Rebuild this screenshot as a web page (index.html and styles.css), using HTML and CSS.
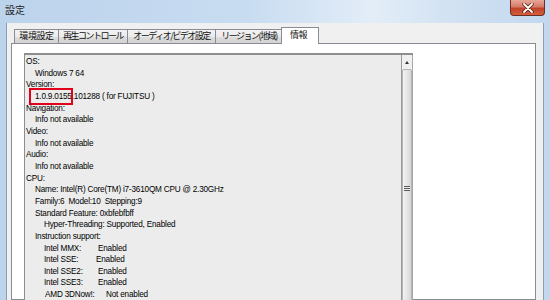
FILE: index.html
```html
<!DOCTYPE html>
<html lang="ja">
<head>
    <meta charset="UTF-8">
    <title>設定</title>
    <link rel="stylesheet" href="styles.css">
</head>
<body>
    <div class="window">
        <div class="titlebar">
            <span class="title">設定</span>
            <div class="close">
                <svg width="14" height="10" viewBox="0 0 14 10">
                    <path d="M3 1 L11 9 M11 1 L3 9" stroke="#5a1d16" stroke-width="3.4" stroke-linecap="round"/>
                    <path d="M3 1 L11 9 M11 1 L3 9" stroke="#ffffff" stroke-width="1.8" stroke-linecap="round"/>
                </svg>
            </div>
        </div>
        <div class="client">
            <div class="tabs">
                <div class="tab t-env">環境設定</div>
                <div class="tab t-play kana">再生コントロール</div>
                <div class="tab t-av kana">オーディオ/ビデオ設定</div>
                <div class="tab t-region kana">リージョン(地域)</div>
                <div class="tab active">情報</div>
            </div>
            <div class="panel">
                <div class="listbox">
                    <div class="lines">
                        <div class="l0">OS:</div>
                        <div class="l1">Windows 7 64</div>
                        <div class="l0">Version:</div>
                        <div class="l1"><span class="mark">1.0.9.0155</span>.101288 ( for FUJITSU )</div>
                        <div class="l0">Navigation:</div>
                        <div class="l1">Info not available</div>
                        <div class="l0">Video:</div>
                        <div class="l1">Info not available</div>
                        <div class="l0">Audio:</div>
                        <div class="l1">Info not available</div>
                        <div class="l0">CPU:</div>
                        <div class="l1">Name: Intel(R) Core(TM) i7-3610QM CPU @ 2.30GHz</div>
                        <div class="l1">Family:6&nbsp; Model:10&nbsp; Stepping:9</div>
                        <div class="l1">Standard Feature: 0xbfebfbff</div>
                        <div class="l2">Hyper-Threading: Supported, Enabled</div>
                        <div class="l1">Instruction support:</div>
                        <div class="l2"><span class="key">Intel MMX:</span>Enabled</div>
                        <div class="l2"><span class="key short">Intel SSE:</span>Enabled</div>
                        <div class="l2"><span class="key">Intel SSE2:</span>Enabled</div>
                        <div class="l2"><span class="key">Intel SSE3:</span>Enabled</div>
                        <div class="l2 amd"><span class="key wide">AMD 3DNow!:</span>Not enabled</div>
                    </div>
                    <div class="scrollbar">
                        <div class="arrow"></div>
                        <div class="thumb">
                            <div class="grip"></div>
                        </div>
                    </div>
                </div>
            </div>
        </div>
    </div>
</body>
</html>
```

FILE: styles.css
```css
body {
    margin: 0;
    width: 550px;
    height: 300px;
    overflow: hidden;
    font-family: "Liberation Sans", Arial, sans-serif;
    background-color: #c9dbef;
}
.window {
    height: 300px;
    overflow: hidden;
    display: flex;
    flex-direction: column;
    background: linear-gradient(90deg, #bcd3ec 0%, #c8dcf1 45%, #e3edf8 68%, #d4e3f3 80%, #c2d7ee 100%);
    padding: 0 6px 0 6px;
}
.titlebar {
    height: 23px;
    flex-shrink: 0;
    display: flex;
    justify-content: space-between;
    align-items: flex-start;
}
.title {
    font-family: "Noto Sans CJK JP", sans-serif;
    font-size: 10px;
    line-height: 12px;
    color: #1e1e1e;
    margin: 4px 0 0 -1px;
}
.close {
    width: 35px;
    height: 16px;
    margin-right: -1px;
    box-sizing: border-box;
    border: 1px solid #6f2d25;
    border-top: none;
    border-radius: 0 0 4px 4px;
    background: linear-gradient(#e6a898 0%, #d67c68 45%, #c0412a 55%, #d4603d 100%);
    display: flex;
    justify-content: center;
    align-items: center;
}
.client {
    flex: 1;
    min-height: 0;
    background-color: #f0f0f0;
    border-left: 1px solid #8d9cb0;
    border-right: 1px solid #8d9cb0;
    padding: 4px 7px 0 4px;
    display: flex;
    flex-direction: column;
}
.tabs {
    display: flex;
    align-items: flex-end;
    height: 16px;
    flex-shrink: 0;
    padding-left: 3px;
}
.tab {
    height: 14px;
    box-sizing: border-box;
    margin-left: -1px;
    border: 1px solid #898c95;
    border-bottom: none;
    background: linear-gradient(#f3f3f3 0%, #ebebeb 50%, #dedede 51%, #d2d2d2 100%);
    font-family: "Noto Sans CJK JP", sans-serif;
    font-size: 9px;
    line-height: 12px;
    letter-spacing: -0.4px;
    text-align: center;
    color: #111;
}
.tab.kana {
    letter-spacing: -1.5px;
}
.t-env {
    width: 45px;
    margin-left: 0;
}
.t-play {
    width: 70px;
}
.t-av {
    width: 89px;
}
.t-region {
    width: 68px;
}
.tab.active {
    width: 38px;
    height: 17px;
    margin: 0 -2px -1px -2px;
    padding-right: 3px;
    background: #fff;
    position: relative;
    line-height: 14px;
}
.panel {
    flex: 1;
    min-height: 0;
    background: #fff;
    border: 1px solid #898c95;
    padding: 9px 0 0 12px;
}
.listbox {
    width: 388px;
    height: 260px;
    display: flex;
    border-top: 2px solid #8e8e8e;
    border-left: 1px solid #8e8e8e;
    background-color: #ececec;
}
.lines {
    flex: 1;
    padding: 1px 0 0 1px;
    font-size: 8.2px;
    line-height: 11.65px;
    letter-spacing: -0.2px;
    color: #000;
    white-space: nowrap;
}
.l1 {
    padding-left: 9px;
}
.l2 {
    padding-left: 18px;
}
.amd {
    padding-left: 19px;
}
.key {
    display: inline-block;
    width: 54px;
}
.key.short {
    width: 52px;
}
.key.wide {
    width: 61px;
}
.mark {
    position: relative;
}
.mark::after {
    content: "";
    position: absolute;
    left: -6px;
    right: -1px;
    top: -4px;
    bottom: -4px;
    border: 2px solid #e3001b;
}
.scrollbar {
    width: 12px;
    box-sizing: border-box;
    border-left: 1px solid #9a9a9a;
    border-right: 1px solid #a8a8a8;
    background: #f0f0f0;
    display: flex;
    flex-direction: column;
}
.arrow {
    height: 14px;
    flex-shrink: 0;
    position: relative;
}
.arrow::after {
    content: "";
    position: absolute;
    left: 3px;
    top: 6px;
    border-left: 2.5px solid transparent;
    border-right: 2.5px solid transparent;
    border-bottom: 3px solid #333;
}
.thumb {
    flex: 1;
    border: 1px solid #b4b4b4;
    border-radius: 2px;
    background: linear-gradient(90deg, #f2f2f2 0%, #e6e6e6 50%, #d6d6d6 100%);
    padding-top: 116px;
}
.grip {
    width: 6px;
    height: 5px;
    margin-left: 1px;
    background: repeating-linear-gradient(#5b5b5b 0 1px, #eeeeee 1px 2px);
}
```
